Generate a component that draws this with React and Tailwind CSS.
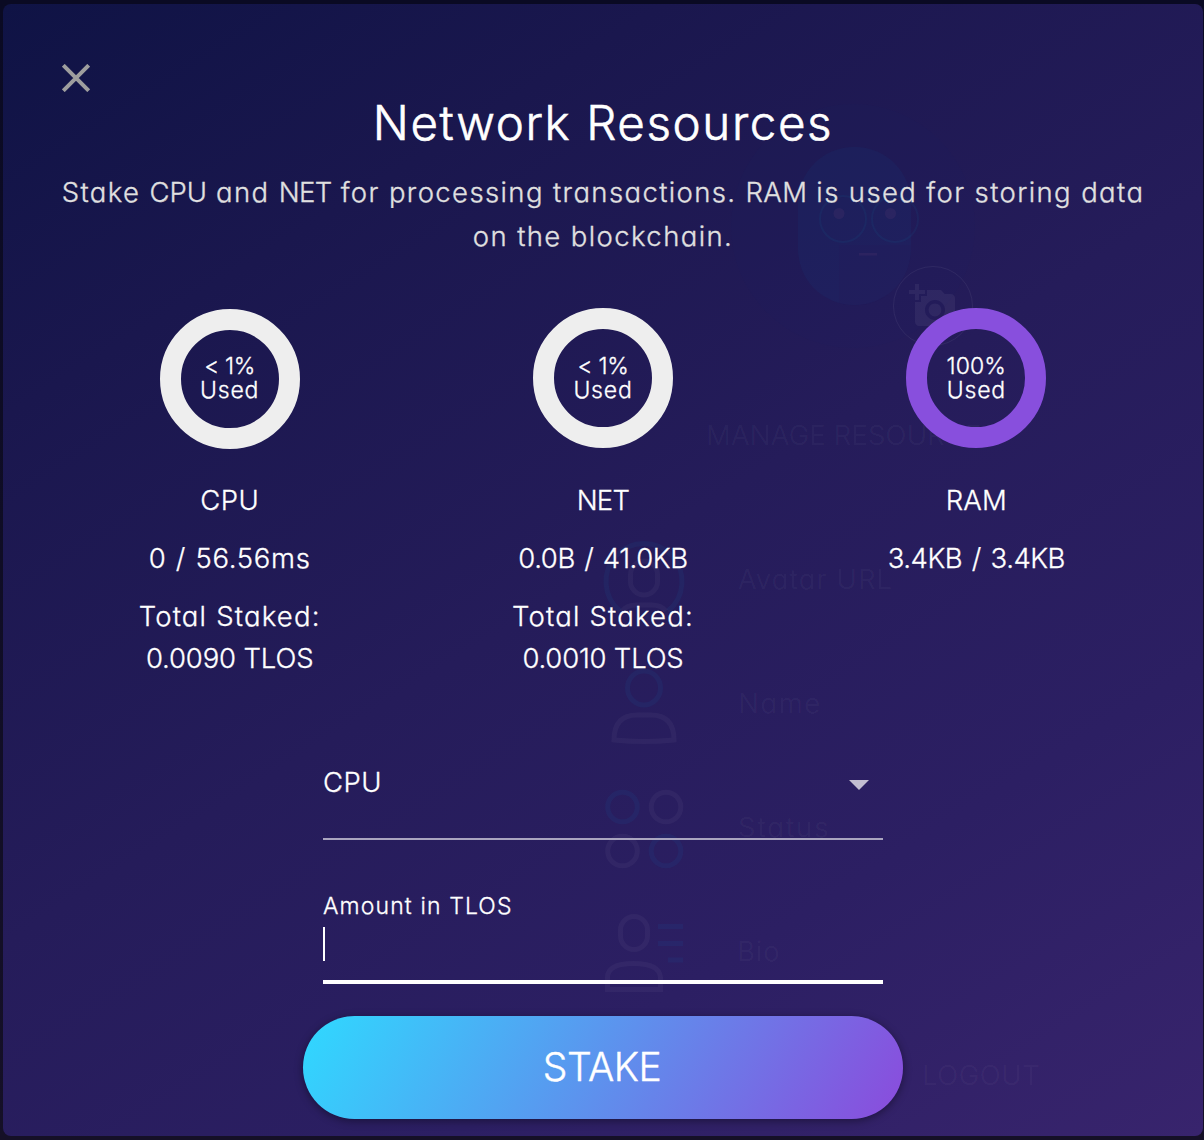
import { MdAddAPhoto } from 'react-icons/md';

const resources = [
  {
    name: 'CPU', nameSpacing: 'tracking-[0.4px]',
    percent: '< 1%', percentSpacing: 'tracking-[-0.3px]',
    usage: '0 / 56.56ms', usageSpacing: 'tracking-[0.7px] [word-spacing:1px]',
    staked: '0.0090 TLOS', stakedSpacing: 'tracking-[-0.15px]',
    ring: 'top-px border-[#eeeeee]',
  },
  {
    name: 'NET', nameSpacing: 'tracking-[-0.7px]',
    percent: '< 1%', percentSpacing: 'tracking-[-0.3px]',
    usage: '0.0B / 41.0KB', usageSpacing: 'tracking-[-0.4px] [word-spacing:2px]',
    staked: '0.0010 TLOS', stakedSpacing: 'tracking-[-0.2px]',
    ring: 'top-0 border-[#eeeeee]',
  },
  {
    name: 'RAM', nameSpacing: 'tracking-[0.1px]',
    percent: '100%', percentSpacing: 'tracking-[0.1px]',
    usage: '3.4KB / 3.4KB', usageSpacing: 'tracking-[-0.5px] [word-spacing:2.5px]',
    staked: null, stakedSpacing: '',
    ring: 'top-0 border-[#884fdd]',
  },
];

/* The profile page, barely visible through the dialog. */
function ProfileBackdrop() {
  return (
    <div aria-hidden="true" className="pointer-events-none absolute inset-0 text-[27.5px] leading-[32px] text-white/[0.055] [-webkit-text-stroke:0px]">
      <svg className="absolute inset-0 h-full w-full" viewBox="0 0 1204 1140" fill="none">
        <circle cx="853" cy="226" r="122" fill="#1e3a8a" fillOpacity="0.04" />
        <rect x="798" y="147" width="113" height="158" rx="56" fill="#0f66a0" fillOpacity="0.08" />
        <path d="M839 245h72v5a56 56 0 0 1-72 53z" fill="#231b5a" fillOpacity="0.3" />
        <g stroke="#0f78a8" strokeOpacity="0.09" strokeWidth="2">
          <circle cx="843" cy="219" r="23" />
          <circle cx="895" cy="219" r="23" />
        </g>
        <g fill="#a05a88" fillOpacity="0.1">
          <circle cx="839" cy="213.500" r="5.500" />
          <circle cx="890.500" cy="213.500" r="5.500" />
          <rect x="859" y="253" width="18" height="2.500" />
        </g>
        <circle cx="933" cy="306" r="39.500" stroke="#ffffff" strokeOpacity="0.06" />
        <g strokeWidth="5">
          <g stroke="#0f70b0" strokeOpacity="0.1">
            <path d="M620 611a38 38 0 1 1 48 0" />
            <ellipse cx="644" cy="688" rx="16.500" ry="17" />
            <circle cx="622.500" cy="807" r="14.800" />
            <circle cx="666" cy="851" r="14.800" />
            <path d="M658 926.500h25M658 943.500h25M668 960h15" />
          </g>
          <g stroke="#ffffff" strokeOpacity="0.04">
            <rect x="630.500" y="561" width="27" height="34" rx="13.500" />
            <path d="M622 611q5-6 14-6h16q9 0 14 6" />
            <path d="M637 715h14q23 0 23 25-30 3-60 0 0-25 23-25z" />
            <circle cx="666" cy="807" r="14.800" />
            <circle cx="622.500" cy="851" r="14.800" />
            <rect x="620.500" y="916.500" width="27" height="33" rx="13.500" />
            <path d="M607.500 989.500v-12q0-14 26-14t27 14v12z" />
          </g>
        </g>
      </svg>
      <MdAddAPhoto className="absolute left-[909px] top-[282px] h-[48px] w-[48px]" />
      <span className="absolute left-[706px] top-[419px] whitespace-nowrap tracking-[0.2px]">MANAGE RESOURCES</span>
      <span className="absolute left-[738px] top-[563px] whitespace-nowrap tracking-[1.2px]">Avatar URL</span>
      <span className="absolute left-[738px] top-[687px] tracking-[1.6px]">Name</span>
      <span className="absolute left-[738px] top-[811px] tracking-[2px]">Status</span>
      <span className="absolute left-[737px] top-[935px] tracking-[1px]">Bio</span>
      <span className="absolute left-[922px] top-[1059px] tracking-[0.6px]">LOGOUT</span>
    </div>
  );
}

function Resource({ item }) {
  return (
    <div className="flex flex-col items-center text-[27.5px]">
      <div className={`relative flex h-[140px] w-[140px] flex-col items-center rounded-full border-[21px] pt-[25px] text-[23px] leading-[24px] ${item.ring}`}>
        <span className={`whitespace-nowrap ${item.percentSpacing} ${item.name === 'CPU' ? '-mt-px' : ''}`}>{item.percent}</span>
        <span className="tracking-[0.8px]">Used</span>
      </div>
      <p className={`mt-[31px] leading-[42px] ${item.nameSpacing}`}>{item.name}</p>
      <p className={`mt-4 leading-[42px] ${item.usageSpacing}`}>{item.usage}</p>
      {item.staked && (
        <div className="mt-4 flex flex-col items-center leading-[42px]">
          <p className="tracking-[1.200px]">Total Staked:</p>
          <p className={item.stakedSpacing}>{item.staked}</p>
        </div>
      )}
    </div>
  );
}

export default function App() {
  return (
    <div className="h-[1140px] w-[1204px] overflow-hidden bg-linear-to-b from-[#0a0a23] to-[#151027] pl-[3px] pr-px pt-1 font-['Inter',sans-serif] font-light text-white [-webkit-text-stroke:0.3px] [font-feature-settings:'cv11']">
      <main className="h-[1132px] w-[1200px] rounded-lg bg-[linear-gradient(148deg,#0f1345_0%,#1a174e_22%,#251c5a_50%,#2c1f63_75%,#38246d_100%)] px-[40px]">
        <div className="absolute left-0 top-0 h-[1140px] w-[1204px]"><ProfileBackdrop /></div>
        <div className="relative flex flex-col">
          <button aria-label="Close" className="ml-[19px] mt-[60px] h-[28px] w-[28px]">
            <svg viewBox="0 0 28 28" className="h-full w-full" fill="none" stroke="#9e9e9e" strokeWidth="4">
              <path d="M1.300 1.300l25.400 25.400M26.700 1.300L1.300 26.700" />
            </svg>
          </button>
          <h1 className="mt-[4px] text-center text-[47.5px] leading-[54px] tracking-[1.600px] [-webkit-text-stroke:0.6px]">Network Resources</h1>
          <p className="mt-[20px] whitespace-nowrap text-center text-[27.5px] leading-[44px] tracking-[1.380px] text-[#e0e0e0]">
            Stake <span className="tracking-[0px]">CPU</span> and <span className="tracking-[-0.600px]">NET</span> for processing transactions. <span className="tracking-[0.300px]">RAM</span> is used for storing data
            <br />
            <span className="tracking-[1.400px]">on the blockchain.</span>
          </p>
          <section className="mt-[50px] grid h-[372px] grid-cols-3">
            {resources.map((item) => <Resource key={item.name} item={item} />)}
          </section>
          <form className="mx-auto flex w-[560px] flex-col">
            <div className="mt-[62px] flex h-[98px] items-start justify-between border-b-2 border-[#aaa5bf] pr-[14px] pt-[19px] text-[27.5px] leading-[42px]">
              <span className="tracking-[0.500px]">CPU</span>
              <svg viewBox="0 0 20 10" className="mt-[19px] h-[10px] w-[20px]" fill="#c3bed2"><path d="M0 0h20L10 10z" /></svg>
            </div>
            <div className="mt-[50px] flex h-[94px] flex-col items-start border-b-4 border-white">
              <label className="text-[23px] leading-[33px] tracking-[1.120px]">Amount in TLOS</label>
              <span className="mt-[4px] h-[34px] w-[2px] bg-white" />
            </div>
          </form>
          <button className="mx-auto mt-8 h-[103px] w-[600px] rounded-full bg-[linear-gradient(120deg,#2fd9ff_0%,#884fdd_97%)] pr-[2px] text-[39px] leading-[101px] tracking-[-0.500px] shadow-[0_2px_8px_rgba(0,0,0,0.4)] [-webkit-text-stroke:0.4px]">
            <span className="block h-[103px]">STAKE</span>
          </button>
        </div>
      </main>
    </div>
  );
}
